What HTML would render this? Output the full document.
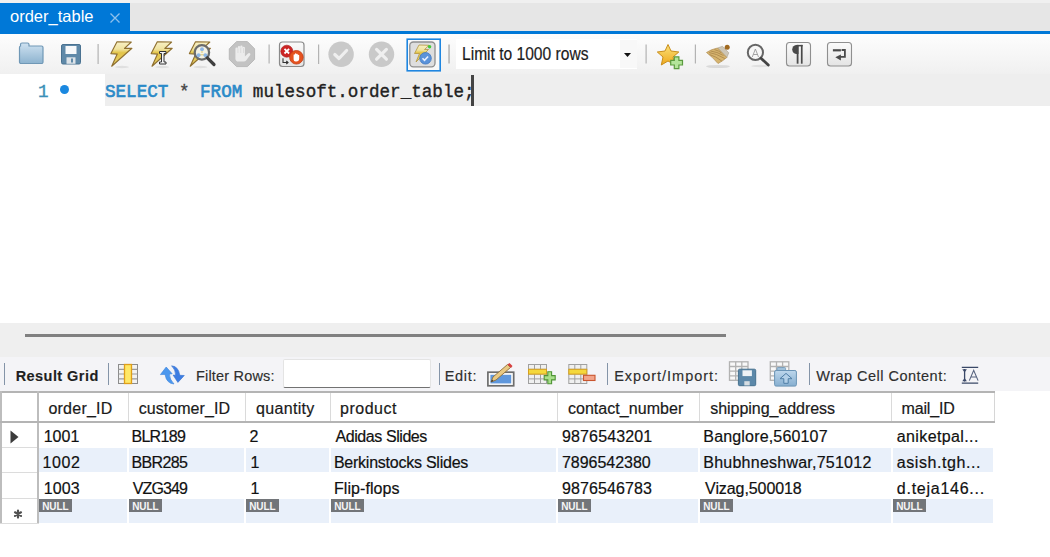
<!DOCTYPE html>
<html><head><meta charset="utf-8">
<style>
*{margin:0;padding:0;box-sizing:border-box}
html,body{width:1050px;height:557px;overflow:hidden;background:#fff;font-family:"Liberation Sans",sans-serif}
.a{position:absolute;white-space:pre;line-height:1}
.code{font-family:"Liberation Mono",monospace;font-size:17.6px;line-height:normal;-webkit-text-stroke:0.35px currentColor}
.sep{position:absolute;width:1px;background:#b9b9b9}
.rsep{position:absolute;width:1.3px;background:#8494a8;top:363px;height:22px}
.rt{font-size:14.5px;color:#2e2e2e;top:369px;-webkit-text-stroke:0.15px #2e2e2e}
.hd{font-size:16px;color:#1a1a1a;-webkit-text-stroke:0.2px #1a1a1a}
.c{font-size:16px;color:#111;-webkit-text-stroke:0.2px #111}
.cs{position:absolute;top:393px;width:1px;height:28px;background:#dadada}
.bg2{position:absolute;background:#e9f0fa}
.null{position:absolute;width:33px;height:13.2px;background:#727579;color:#f6f6f6;font-size:10px;font-weight:bold;line-height:16.6px;padding-left:3.2px;letter-spacing:-0.1px;overflow:hidden}
svg{position:absolute;left:0;top:0}
</style></head><body>
<!-- tab strip -->
<div class="a" style="left:0;top:0;width:1050px;height:31px;background:#e6e6e6"></div>
<div class="a" style="left:0;top:0;width:1050px;height:3px;background:#f0f0f0"></div>
<div class="a" style="left:0;top:3px;width:130px;height:28px;background:#0078d7"></div>
<div class="a" style="left:0;top:31px;width:1050px;height:3px;background:#0078d7"></div>
<div class="a" style="left:10px;top:7.5px;font-size:16.5px;color:#fff">order_table</div>
<!-- toolbar -->
<div class="a" style="left:0;top:34px;width:1050px;height:40px;background:linear-gradient(#fdfdfd,#f0f0f0)"></div>
<!-- editor -->
<div class="a" style="left:105px;top:74px;width:945px;height:32px;background:#eeeeee"></div>
<div class="a code" style="left:38px;top:82px;color:#3a8fb7">1</div>
<div class="a" style="left:60px;top:85px;width:9px;height:9px;border-radius:50%;background:#1a88e0"></div>
<div class="a code" style="left:105px;top:82px"><span style="color:#2a8ac8;-webkit-text-stroke:0.6px #2a8ac8">SELECT</span> <span style="color:#444">*</span> <span style="color:#2a8ac8;-webkit-text-stroke:0.6px #2a8ac8">FROM</span> <span style="color:#222">mulesoft.order_table;</span></div>
<div class="a" style="left:471px;top:75px;width:3px;height:31px;background:#444"></div>
<!-- splitter -->
<div class="a" style="left:0;top:323px;width:1050px;height:34px;background:#efefef"></div>
<div class="a" style="left:25px;top:334px;width:701px;height:3px;background:#808080"></div>
<!-- result toolbar -->
<div class="a" style="left:0;top:357px;width:1050px;height:34px;background:#f4f4f7"></div>
<div class="rsep" style="left:4px"></div>
<div class="a rt" style="left:15.7px;font-weight:bold;color:#1e1e1e;letter-spacing:0.44px">Result Grid</div>
<div class="rsep" style="left:108px"></div>
<div class="a rt" style="left:196px;letter-spacing:0.18px">Filter Rows:</div>
<div class="a" style="left:283px;top:359px;width:148px;height:28.5px;background:#fff;border:1px solid #e4e4e4;border-bottom:1.6px solid #727272;border-radius:2px"></div>
<div class="rsep" style="left:439px"></div>
<div class="a rt" style="left:444.7px;letter-spacing:0.72px">Edit:</div>
<div class="rsep" style="left:607px"></div>
<div class="a rt" style="left:614.2px;letter-spacing:0.99px">Export/Import:</div>
<div class="rsep" style="left:809px"></div>
<div class="a rt" style="left:816.3px;letter-spacing:0.48px">Wrap Cell Content:</div>
<!-- grid -->
<div class="a" style="left:0;top:391px;width:995px;height:2px;background:#b4b4b4"></div>
<div class="a" style="left:0;top:391px;width:2px;height:133px;background:#bdbdbd"></div>
<div class="a" style="left:37px;top:391px;width:2px;height:133px;background:#bdbdbd"></div>
<div class="a" style="left:0;top:421px;width:995px;height:2px;background:#b4b4b4"></div>
<div class="a" style="left:994px;top:393px;width:1px;height:28px;background:#d6d6d6"></div>
<div class="cs" style="left:128px"></div>
<div class="cs" style="left:245px"></div>
<div class="cs" style="left:330px"></div>
<div class="cs" style="left:557px"></div>
<div class="cs" style="left:699px"></div>
<div class="cs" style="left:891px"></div>
<div class="a" style="left:2px;top:447px;width:35px;height:1px;background:#dcdcdc"></div>
<div class="a" style="left:2px;top:472px;width:35px;height:1px;background:#dcdcdc"></div>
<div class="a" style="left:2px;top:498px;width:35px;height:1px;background:#dcdcdc"></div>
<div class="a" style="left:0;top:523px;width:39px;height:1px;background:#dcdcdc"></div>
<div id="rows">
<div class="bg2" style="left:39px;top:448px;width:88px;height:24px"></div>
<div class="bg2" style="left:39px;top:499px;width:88px;height:24px"></div>
<div class="bg2" style="left:129px;top:448px;width:115px;height:24px"></div>
<div class="bg2" style="left:129px;top:499px;width:115px;height:24px"></div>
<div class="bg2" style="left:246px;top:448px;width:83px;height:24px"></div>
<div class="bg2" style="left:246px;top:499px;width:83px;height:24px"></div>
<div class="bg2" style="left:331px;top:448px;width:225px;height:24px"></div>
<div class="bg2" style="left:331px;top:499px;width:225px;height:24px"></div>
<div class="bg2" style="left:558px;top:448px;width:140px;height:24px"></div>
<div class="bg2" style="left:558px;top:499px;width:140px;height:24px"></div>
<div class="bg2" style="left:700px;top:448px;width:191px;height:24px"></div>
<div class="bg2" style="left:700px;top:499px;width:191px;height:24px"></div>
<div class="bg2" style="left:893px;top:448px;width:100px;height:24px"></div>
<div class="bg2" style="left:893px;top:499px;width:100px;height:24px"></div>
<div class="a hd" style="left:48.4px;top:401.3px;letter-spacing:0.243px">order_ID</div>
<div class="a hd" style="left:138.7px;top:401.3px;letter-spacing:0.06px">customer_ID</div>
<div class="a hd" style="left:256px;top:401.3px;letter-spacing:0.329px">quantity</div>
<div class="a hd" style="left:340px;top:401.3px;letter-spacing:0.517px">product</div>
<div class="a hd" style="left:567.9px;top:401.3px;letter-spacing:0.046px">contact_number</div>
<div class="a hd" style="left:710.3px;top:401.3px;letter-spacing:-0.047px">shipping_address</div>
<div class="a hd" style="left:901.6px;top:401.3px;letter-spacing:-0.183px">mail_ID</div>
<div class="a c" style="left:43.7px;top:429.4px">1001</div>
<div class="a c" style="left:131.4px;top:429.4px;letter-spacing:-0.68px">BLR189</div>
<div class="a c" style="left:249.5px;top:429.4px">2</div>
<div class="a c" style="left:335.5px;top:429.4px;letter-spacing:-0.425px">Adidas Slides</div>
<div class="a c" style="left:562.1px;top:429.4px;letter-spacing:0.111px">9876543201</div>
<div class="a c" style="left:703.3px;top:429.4px;letter-spacing:0.171px">Banglore,560107</div>
<div class="a c" style="left:896.8px;top:429.4px;letter-spacing:0.382px">aniketpal...</div>
<div class="a c" style="left:42.6px;top:455.0px;letter-spacing:0.533px">1002</div>
<div class="a c" style="left:131.4px;top:455.0px;letter-spacing:-0.62px">BBR285</div>
<div class="a c" style="left:250.5px;top:455.0px">1</div>
<div class="a c" style="left:333.9px;top:455.0px;letter-spacing:-0.239px">Berkinstocks Slides</div>
<div class="a c" style="left:561.9px;top:455.0px;letter-spacing:-0.022px">7896542380</div>
<div class="a c" style="left:703.3px;top:455.0px;letter-spacing:0.239px">Bhubhneshwar,751012</div>
<div class="a c" style="left:896.8px;top:455.0px;letter-spacing:0.564px">asish.tgh...</div>
<div class="a c" style="left:43.7px;top:480.8px;letter-spacing:0.1px">1003</div>
<div class="a c" style="left:132.8px;top:480.8px;letter-spacing:-0.9px">VZG349</div>
<div class="a c" style="left:250.5px;top:480.8px">1</div>
<div class="a c" style="left:334.0px;top:480.8px;letter-spacing:0.056px">Flip-flops</div>
<div class="a c" style="left:562.1px;top:480.8px;letter-spacing:0.089px">9876546783</div>
<div class="a c" style="left:705.1px;top:480.8px;letter-spacing:-0.082px">Vizag,500018</div>
<div class="a c" style="left:896.8px;top:480.8px;letter-spacing:0.745px">d.teja146...</div>
<div class="null" style="left:39px;top:499.2px">NULL</div>
<div class="null" style="left:129px;top:499.2px">NULL</div>
<div class="null" style="left:246px;top:499.2px">NULL</div>
<div class="null" style="left:331px;top:499.2px">NULL</div>
<div class="null" style="left:558px;top:499.2px">NULL</div>
<div class="null" style="left:700px;top:499.2px">NULL</div>
<div class="null" style="left:893px;top:499.2px">NULL</div>
</div><!--/rows-->
<!--ICONS--><svg width="1050" height="557" viewBox="0 0 1050 557">
<defs>
<linearGradient id="gFold" x1="0" y1="0" x2="0" y2="1"><stop offset="0" stop-color="#cfe2f1"/><stop offset="1" stop-color="#8db3cf"/></linearGradient>
<linearGradient id="gBolt" x1="0" y1="0" x2="0" y2="1"><stop offset="0" stop-color="#f8f0c4"/><stop offset="0.3" stop-color="#f0e3a0"/><stop offset="0.45" stop-color="#e3c448"/><stop offset="1" stop-color="#e6cf6a"/></linearGradient>
<linearGradient id="gBtn" x1="0" y1="0" x2="0" y2="1"><stop offset="0" stop-color="#fbfbfb"/><stop offset="1" stop-color="#e4e4e4"/></linearGradient>
<linearGradient id="gStar" x1="0" y1="0" x2="0" y2="1"><stop offset="0" stop-color="#fbe27a"/><stop offset="1" stop-color="#eea81c"/></linearGradient>
<linearGradient id="gBlueBox" x1="0" y1="0" x2="0" y2="1"><stop offset="0" stop-color="#bdd7ec"/><stop offset="1" stop-color="#86aed0"/></linearGradient>
<g id="bolt"><polygon points="7,0.8 21.3,1 14.5,7.3 21.9,7.3 1.7,25.2 7.2,13.1 0.9,12.6" fill="url(#gBolt)" stroke="#8f7030" stroke-width="1.15" stroke-linejoin="round"/><ellipse cx="12" cy="26" rx="7" ry="1.2" fill="#000" opacity="0.08"/></g>
</defs>
<!-- tab close -->
<path d="M110.5 13.5 L119.5 22.5 M119.5 13.5 L110.5 22.5" stroke="#8fc0ec" stroke-width="1.3"/>
<!-- folder -->
<path d="M20.5 46 v-1.5 a1.5 1.5 0 0 1 1.5 -1.5 h5.5 a1.5 1.5 0 0 1 1.5 1.5 v1.5 h12.5 a1.5 1.5 0 0 1 1.5 1.5 v14.5 a1.5 1.5 0 0 1 -1.5 1.5 h-20.5 a1.5 1.5 0 0 1 -1.5 -1.5 v-14.5 a1.5 1.5 0 0 1 1 -1.5z" fill="url(#gFold)" stroke="#7098b6" stroke-width="1.2"/>
<!-- floppy -->
<rect x="61.5" y="44.5" width="19" height="19.5" rx="1.5" fill="#5f89a8" stroke="#4a7291"/>
<rect x="65.5" y="46" width="11" height="8" fill="#f6f8fa"/>
<rect x="66.5" y="57.3" width="9" height="6.5" fill="#dde3e8"/>
<rect x="71" y="58.5" width="2" height="4" fill="#5f89a8"/>
<!-- separators -->
<g fill="#b3b3b3"><rect x="97.5" y="44" width="1.2" height="20"/><rect x="268.5" y="44.5" width="1.2" height="19"/><rect x="318" y="44.5" width="1.2" height="19.5"/><rect x="448.3" y="44.5" width="1.5" height="19"/><rect x="645.5" y="44.5" width="1.2" height="19"/><rect x="694.8" y="44.5" width="1.2" height="19"/></g>
<!-- bolts -->
<use href="#bolt" x="110" y="41"/>
<use href="#bolt" x="150.3" y="41"/>
<use href="#bolt" x="188.5" y="41"/>
<!-- I-beam -->
<path d="M159.5 51.5 h6.5 v2 h-2 v8.5 h2 v2 h-6.5 v-2 h2 v-8.5 h-2z" fill="#f4f4f4" stroke="#333" stroke-width="1"/>
<!-- magnifier over bolt 3 -->
<circle cx="201.9" cy="52.4" r="7.2" fill="#f4f2e4" stroke="#6b6b6b" stroke-width="2.3"/>
<path d="M202 49.5 v3.5 M198.8 54.8 h6.4" stroke="#d9c36a" stroke-width="0.9"/><circle cx="202" cy="49.2" r="1.9" fill="#8db6e6"/><circle cx="198.6" cy="55.2" r="1.9" fill="#8db6e6"/><circle cx="205.4" cy="55.2" r="1.9" fill="#8db6e6"/>
<path d="M207.3 57.8 L214 64.5" stroke="#3f3f3f" stroke-width="3.2" stroke-linecap="round"/>
<!-- stop octagon -->
<polygon points="236.6,41.6 247.4,41.6 254.6,48.8 254.6,59.4 247.4,66.6 236.6,66.6 229.3,59.4 229.3,48.8" fill="#c3c3c3" stroke="#bababa" stroke-width="1"/>
<path d="M235.4 56.5 V48.8 a1.2 1.2 0 0 1 2.4 0 V53 V47.2 a1.2 1.2 0 0 1 2.4 0 V53 V46.8 a1.2 1.2 0 0 1 2.4 0 V53 V48 a1.15 1.15 0 0 1 2.3 0 V56.5 L248 53.6 a1.3 1.3 0 0 1 2.2 1.4 L246.5 60 a3.5 3.5 0 0 1 -3 1.6 H238.5 a3.1 3.1 0 0 1 -3.1 -3.1 Z" fill="#ececec"/>
<path d="M237.9 48.5 v4.5 M240.7 47.5 v5.5 M243.5 48 v5" stroke="#cdcdcd" stroke-width="0.5"/>
<!-- stop on error button -->
<rect x="279.5" y="42" width="24.5" height="24.5" rx="3" fill="url(#gBtn)" stroke="#8a8a8a" stroke-width="1.2"/>
<path d="M283 58.3 v4.2 h4.8 M286.3 61 l1.7 1.5 -1.7 1.5" stroke="#333" stroke-width="1.1" fill="none"/>
<circle cx="286.8" cy="51.2" r="6" fill="#cc2424" stroke="#a81a1a" stroke-width="0.6"/>
<path d="M284.5 48.9 l4.6 4.6 M289.1 48.9 l-4.6 4.6" stroke="#fff" stroke-width="1.8"/>
<circle cx="296.4" cy="57.3" r="6.8" fill="#e5521f" stroke="#c33a12" stroke-width="0.8"/>
<path d="M293.6 59.6 v-4.6 a0.7 0.7 0 0 1 1.4 0 v-1 a0.7 0.7 0 0 1 1.4 0 v0.5 a0.7 0.7 0 0 1 1.4 0 v1 a0.7 0.7 0 0 1 1.4 0 v3 a3 3 0 0 1 -3 3 h-0.6 a2 2 0 0 1 -2 -2z" fill="#fff"/>
<!-- check circle -->
<circle cx="341.1" cy="54.3" r="12.7" fill="#c9c9c9"/>
<path d="M334.8 54.5 l4.2 4 l7.6 -8" stroke="#efefef" stroke-width="3.2" fill="none" stroke-linecap="round" stroke-linejoin="round"/>
<!-- x circle -->
<circle cx="381.5" cy="54.3" r="12.7" fill="#c9c9c9"/>
<path d="M376.6 49.4 l9.8 9.8 M386.4 49.4 l-9.8 9.8" stroke="#efefef" stroke-width="3.2" stroke-linecap="round"/>
<!-- autocommit selected -->
<rect x="407.2" y="39.2" width="33" height="31.6" fill="#f9f9f9" stroke="#1f86e0" stroke-width="1.6"/>
<rect x="409.8" y="42" width="25.2" height="24.8" rx="3.5" fill="#dedede" stroke="#8e8e8e" stroke-width="1.3"/>
<polygon points="419,45 429,45.3 424.5,49.5 428.5,49.5 416,62 419.5,53.5 414.5,53.5" fill="url(#gBolt)" stroke="#b29640" stroke-width="0.8"/>
<circle cx="425.5" cy="58.3" r="5.8" fill="#5b93da" stroke="#3f77c0" stroke-width="0.8"/>
<path d="M422.5 58.3 l2 2 l3.6 -3.8" stroke="#e8f0ff" stroke-width="1.6" fill="none"/>
<circle cx="429.6" cy="46.8" r="1.7" fill="#43c93a"/>
<!-- dropdown -->
<rect x="456" y="39" width="181" height="30" fill="#ffffff"/>
<rect x="620" y="40" width="17" height="28" fill="#f8f8f8"/>
<polygon points="624,53 631,53 627.5,57" fill="#111"/>
<!-- star plus -->
<polygon points="668,44.5 671,51 678.8,52 673,57 674.8,65 668,61 661.3,65 663,57 657.3,52 665,51" fill="url(#gStar)" stroke="#c98e1b" stroke-width="1" stroke-linejoin="round"/>
<path d="M674.3 56.8 h4.6 v3.6 h3.6 v4.6 h-3.6 v3.6 h-4.6 v-3.6 h-3.6 v-4.6 h3.6z" fill="#b4e59b" stroke="#5b9b3f" stroke-width="1.2"/>
<!-- broom -->
<ellipse cx="718" cy="66.5" rx="12" ry="1.6" fill="#000" opacity="0.1"/>
<path d="M717.5 48 L722.5 46.3 L728.8 52.8 L726.8 57.5z" fill="#cdc6b6" stroke="#a9a191" stroke-width="0.6"/>
<circle cx="727.2" cy="47.2" r="2.5" fill="#a0691f"/>
<path d="M706.5 52.5 Q711 49.3 717.5 48 L726.8 57.5 Q722 61.5 718 63.5 Q712.5 57 706.5 52.5z" fill="#d6b46e" stroke="#b08c52" stroke-width="0.7"/>
<path d="M709 52.5 Q716 53.5 724.8 58.5 M710.5 51 Q717 51.8 723.5 55.5 M709.5 54.5 Q716 56.5 721.8 61 M714.5 49.6 Q719 50.8 721.5 53" stroke="#a8844a" stroke-width="0.8" fill="none"/>
<!-- magnifier A -->
<ellipse cx="760" cy="66" rx="9" ry="1.2" fill="#000" opacity="0.08"/>
<circle cx="755.4" cy="52.4" r="7.6" fill="#f7f7f7" stroke="#666" stroke-width="2"/>
<path d="M752.3 57 l3.1 -8 l3.1 8 M753.3 54.5 h4.2" stroke="#9a9a9a" stroke-width="0.9" fill="none"/>
<path d="M761 58.3 l7.3 6.7" stroke="#444" stroke-width="2.8" stroke-linecap="round"/>
<!-- pilcrow button -->
<rect x="786.5" y="42.5" width="24" height="23.5" rx="3" fill="url(#gBtn)" stroke="#8f8f8f" stroke-width="1.1"/>
<path d="M798.5 44.9 h-1.8 a4.5 4.6 0 0 0 0 9.2 h1.8z" fill="#4a4a4a"/>
<rect x="796.7" y="44.9" width="5.9" height="1.5" fill="#4a4a4a"/>
<rect x="796.7" y="44.9" width="1.8" height="18.8" fill="#4a4a4a"/>
<rect x="800.9" y="44.9" width="1.7" height="18.8" fill="#4a4a4a"/>
<!-- wrap button -->
<rect x="827.5" y="42.5" width="24" height="23.5" rx="3" fill="url(#gBtn)" stroke="#8f8f8f" stroke-width="1.1"/>
<rect x="832.9" y="49.2" width="8" height="2.2" fill="#4a4a4a"/>
<path d="M841.6 50 h3.3 v6.8 h-5.5" stroke="#4a4a4a" stroke-width="1.8" fill="none"/>
<polygon points="835.3,57.2 840.9,54.4 840.9,60.4" fill="#4a4a4a"/>
<!-- result toolbar icons -->
<!-- grid columns icon -->
<rect x="118.5" y="364.5" width="19" height="19" fill="#f2f2f2" stroke="#8c8c8c"/>
<g stroke="#9a9a9a" stroke-width="1.2"><path d="M118.5 369.3 h19 M118.5 374 h19 M118.5 378.8 h19"/></g>
<rect x="124.5" y="364.5" width="7" height="19" fill="#ffe866" stroke="#df9e1a" stroke-width="1.3"/>
<!-- refresh -->
<path d="M160.4 374.6 L166.2 367 L172.2 373.8 L169.4 374.1 Q169.6 379.5 174 384 Q166.5 383.5 165 374.4 Z" fill="#4b97ee" stroke="#3a83dc" stroke-width="0.6" stroke-linejoin="round"/>
<path d="M171.6 365.8 Q178.5 366.3 179.8 375.3 L184.3 375.5 L177.9 382.4 L173.1 375.1 L175.7 375.2 Q175.5 369.5 171.6 365.8 Z" fill="#3d7de2" stroke="#3270d0" stroke-width="0.6" stroke-linejoin="round"/>
<!-- edit pencil -->
<rect x="487.9" y="372.2" width="25.8" height="13.6" fill="#fbfbfb" stroke="#6d6d6d" stroke-width="1.7"/><rect x="490.4" y="374.8" width="20.8" height="8.6" fill="#5f97dc"/>
<path d="M491 382 l2 -5 l14.5 -12.5 l3 3 l-14.5 12.5z" fill="#e9c983" stroke="#8d6f3a" stroke-width="0.9"/>
<path d="M507.5 364.5 l2 -1.5 l3 3 l-1.5 2z" fill="#d84040"/>
<path d="M491 382 l1 -2.5 l1.5 1.5z" fill="#333"/>
<!-- add row -->
<g stroke="#a0a0a0" stroke-width="1"><rect x="528.5" y="364.5" width="18" height="19" fill="#f0f0f0"/><path d="M528.5 369.3 h18 M528.5 374.1 h18 M528.5 378.9 h18 M534.5 364.5 v19 M540.5 364.5 v19"/></g>
<rect x="528.5" y="369.3" width="18" height="4.8" fill="#f4d83c" stroke="#d8a020" stroke-width="1"/>
<path d="M547.8 371.8 h3.8 v3.8 h3.6 v4.3 h-3.6 v3.8 h-3.8 v-3.8 h-3.6 v-4.3 h3.6z" fill="#a8df8a" stroke="#4f9436" stroke-width="1.1"/>
<!-- delete row -->
<g stroke="#a0a0a0" stroke-width="1"><rect x="568.8" y="364.5" width="18" height="19" fill="#f0f0f0"/><path d="M568.8 369.3 h18 M568.8 374.1 h18 M568.8 378.9 h18 M574.8 364.5 v19 M580.8 364.5 v19"/></g>
<rect x="568.8" y="369.3" width="18" height="4.8" fill="#f4d83c" stroke="#d8a020" stroke-width="1"/>
<rect x="583.5" y="375.3" width="11.5" height="5.2" fill="#f2a48a" stroke="#c9552e" stroke-width="1.1"/>
<!-- export -->
<g stroke="#b2b2b2" stroke-width="1.3"><rect x="729.5" y="361.8" width="18.5" height="18.5" fill="#f8f8f8"/><path d="M729.5 366.5 h18.5 M729.5 371.2 h18.5 M729.5 375.8 h18.5 M735.7 361.8 v18.5 M741.8 361.8 v18.5"/></g>
<rect x="738.4" y="369.2" width="17.3" height="16.5" rx="1.3" fill="#5c88a9" stroke="#45708f" stroke-width="1"/>
<rect x="742.5" y="370.3" width="9.4" height="5.8" fill="#eef2f5"/>
<rect x="744.3" y="381.2" width="5.4" height="4.2" fill="#d6dde2"/>
<!-- import -->
<g stroke="#b2b2b2" stroke-width="1.3"><rect x="770.3" y="361.8" width="18.5" height="18.5" fill="#f8f8f8"/><path d="M770.3 366.5 h18.5 M770.3 371.2 h18.5 M770.3 375.8 h18.5 M776.5 361.8 v18.5 M782.6 361.8 v18.5"/></g>
<rect x="777" y="367.5" width="8.6" height="4" rx="1" fill="#9fc0da" stroke="#6f97b8" stroke-width="0.8"/>
<rect x="774.6" y="370.5" width="21.8" height="15.6" rx="1.5" fill="url(#gBlueBox)" stroke="#6a94b6" stroke-width="1"/>
<path d="M786 373.4 L792 378.7 L788.2 378.7 L788.2 383.3 L783.8 383.3 L783.8 378.7 L780 378.7 Z" fill="#b3d0e8" stroke="#4f7ea6" stroke-width="1"/>
<!-- wrap cell icon -->
<path d="M961.8 367.3 h16.4 M961.8 383.2 h16.4 M964.6 369 v12.5" stroke="#3a4868" stroke-width="1.3"/>
<polygon points="962.3,369.2 966.9,369.2 964.6,372.6" fill="#3a4868"/><polygon points="962.3,381.3 966.9,381.3 964.6,377.9" fill="#3a4868"/>
<path d="M969.3 380.6 l4.4 -10.3 l4.4 10.3 M970.8 377 h5.8" stroke="#56627e" stroke-width="1.1" fill="none"/>
<!-- grid markers -->
<polygon points="10.5,430.5 18.5,437 10.5,443.5" fill="#3b3b3b"/>
<g stroke="#505050" stroke-width="2.2" stroke-linecap="round"><path d="M18 510.6 v7 M15 512.3 l6 3.6 M15 515.9 l6 -3.6"/></g>
</svg>
<!--/ICONS-->
<div class="a" style="left:461.8px;top:44.3px;font-size:19px;color:#1b1b1b;transform:scaleX(0.82);transform-origin:0 0;-webkit-text-stroke:0.2px #1b1b1b">Limit to 1000 rows</div>
</body></html>
